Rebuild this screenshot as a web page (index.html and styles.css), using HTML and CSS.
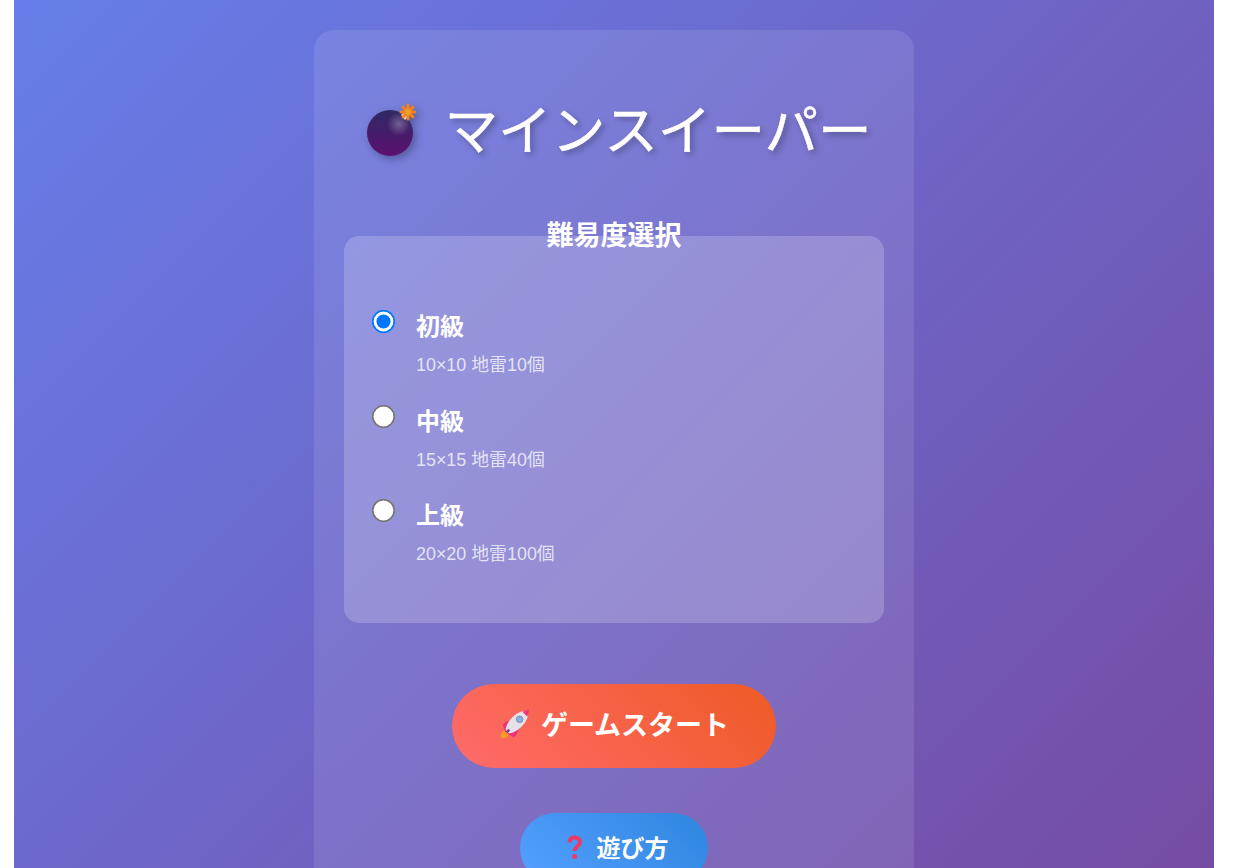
FILE: index.html
```html
<!DOCTYPE html>
<html lang="ja">
<head>
<meta charset="utf-8">
<title>マインスイーパー</title>
<link rel="stylesheet" href="styles.css">
</head>
<body>
<div class="page">
  <main class="card">
    <h1 class="title">
      <svg class="emoji-bomb" viewBox="0 0 56 56" aria-hidden="true">
        <defs>
          <linearGradient id="bombBody" x1="0" y1="0" x2="0" y2="1">
            <stop offset="0" stop-color="#2e2a63"/>
            <stop offset="1" stop-color="#5c0f70"/>
          </linearGradient>
          <radialGradient id="bombShine" cx="0.5" cy="0.5" r="0.5">
            <stop offset="0" stop-color="#fff" stop-opacity=".28"/>
            <stop offset="1" stop-color="#fff" stop-opacity="0"/>
          </radialGradient>
        </defs>
        <circle cx="23" cy="33" r="23" fill="url(#bombBody)"/>
        <circle cx="32" cy="24" r="12" fill="url(#bombShine)"/>
        <path d="M34 15l6-5 4 4-6 6z" fill="#d8d4dc"/>
        <g stroke="#f5811b" stroke-width="3" stroke-linecap="round">
          <path d="M41 5v14M34 12h14M36 7l10 10M46 7L36 17"/>
        </g>
        <circle cx="41" cy="12" r="3" fill="#f0a020"/>
      </svg>
      <span>マインスイーパー</span>
    </h1>

    <fieldset class="levels">
      <legend class="levels-title">難易度選択</legend>
      <label class="level">
        <input class="level-radio" type="radio" name="level" checked>
        <span class="level-text"><strong class="level-name">初級</strong><small class="level-desc">10×10 地雷10個</small></span>
      </label>
      <label class="level">
        <input class="level-radio" type="radio" name="level">
        <span class="level-text"><strong class="level-name">中級</strong><small class="level-desc">15×15 地雷40個</small></span>
      </label>
      <label class="level">
        <input class="level-radio" type="radio" name="level">
        <span class="level-text"><strong class="level-name">上級</strong><small class="level-desc">20×20 地雷100個</small></span>
      </label>
    </fieldset>

    <div class="actions">
      <button class="btn btn-start" type="button">
        <svg class="emoji" viewBox="-1 0 32 32" aria-hidden="true">
          <path d="M1 31c-.500-4 1-8 5-9l4 4c-1 4-5 6-9 5z" fill="#f59a23"/>
          <path d="M3 17c2-3 6-5 10-5l-4 12-3 1z" fill="#ee2f7c"/>
          <path d="M15 30c3-2 5-6 5-11L8 23l1 4z" fill="#ee2f7c"/>
          <ellipse cx="18" cy="14" rx="15" ry="7" transform="rotate(-45 18 14)" fill="#e6e1e8"/>
          <path d="M24 3c2-1 5-2 7-2 0 2-1 5-2 7z" fill="#f0366f"/>
          <path d="M6 24l3-3 2 2-3 3z" fill="#8a3a8c"/>
          <circle cx="21" cy="11" r="3.500" fill="#7fb2ea" stroke="#8d8da0" stroke-width="1"/>
        </svg>
        <span>ゲームスタート</span>
      </button>
      <button class="btn btn-help" type="button">
        <svg class="emoji-q" viewBox="0 0 24 26" aria-hidden="true">
          <path d="M9.500 8.500c0-3.500 2-5 5-5s5.500 1.700 5.500 4.500c0 4.500-5.500 4.500-5.500 9" fill="none" stroke="#ee3a62" stroke-width="4"/>
          <circle cx="14.500" cy="22.500" r="2.500" fill="#ee3a62"/>
        </svg>
        <span>遊び方</span>
      </button>
    </div>
  </main>
</div>
</body>
</html>
```
FILE: styles.css
```css
* { box-sizing: border-box; }

html, body {
  margin: 0;
  height: 868px;
  overflow: hidden;
  background: #fff;
}

body {
  padding-right: 7px;
  font-family: "Liberation Sans", "Noto Sans CJK JP", sans-serif;
  color: #fff;
}

.page {
  max-width: 1200px;
  height: 900px;
  margin: 0 auto;
  padding-top: 30px;
  background: linear-gradient(135deg, #667eea 0%, #764ba2 100%);
}

.card {
  width: 600px;
  margin: 0 auto;
  padding: 30px;
  border-radius: 20px;
  background: rgba(255, 255, 255, 0.1);
}

.title {
  display: flex;
  align-items: center;
  gap: 21.500px;
  height: 80px;
  margin: 30px 0 46px;
  padding-left: 23px;
  font-size: 53.600px;
  font-weight: 400;
  line-height: 1;
  white-space: nowrap;
  -webkit-text-stroke: 0.5px #fff;
  text-shadow: 3px 3px 6px rgba(0, 0, 0, 0.3);
}

.title span {
  padding-top: 4px;
}

.emoji-bomb {
  width: 56px;
  height: 56px;
  flex: none;
  margin-bottom: 4px;
  filter: drop-shadow(3px 3px 4px rgba(0, 0, 0, 0.3));
}

.levels {
  margin: 0 0 61px;
  padding: 54px 28px 29px;
  border: 0;
  border-radius: 15px;
  background: rgba(255, 255, 255, 0.2);
}

.levels-title {
  margin: 0 auto;
  padding: 0;
  font-size: 27px;
  font-weight: 700;
  line-height: 40px;
}

.level {
  display: flex;
  align-items: flex-start;
  gap: 21px;
  min-height: 94.500px;
  cursor: pointer;
}

.level-radio {
  width: 13px;
  height: 13px;
  margin: 5px;
  flex: none;
  transform: scale(1.8);
}

.level-text {
  display: flex;
  flex-direction: column;
  gap: 10px;
  padding-top: 1px;
}

.level-name {
  font-size: 24px;
  line-height: 32px;
  font-weight: 700;
}

.level-desc {
  font-size: 17.900px;
  line-height: 24px;
  color: rgba(255, 255, 255, 0.75);
}

.actions {
  display: flex;
  flex-direction: column;
  align-items: center;
  gap: 45px;
}

.btn {
  display: flex;
  align-items: center;
  justify-content: center;
  border: 0;
  color: #fff;
  font-family: inherit;
  font-weight: 700;
  cursor: pointer;
}

.btn-start {
  gap: 12px;
  width: 324px;
  height: 84px;
  padding: 0 0 4px;
  border-radius: 42px;
  font-size: 27px;
  white-space: nowrap;
  background: linear-gradient(45deg, #ff6b6b, #ee5a24);
}

.btn-help {
  gap: 13px;
  width: 188px;
  height: 70px;
  padding: 0 0 2px;
  border-radius: 35px;
  font-size: 24px;
  white-space: nowrap;
  background: linear-gradient(45deg, #54a0ff, #2e86de);
}

.emoji {
  width: 30px;
  height: 30px;
  flex: none;
}

.emoji-q {
  width: 24px;
  height: 26px;
  flex: none;
}
```
